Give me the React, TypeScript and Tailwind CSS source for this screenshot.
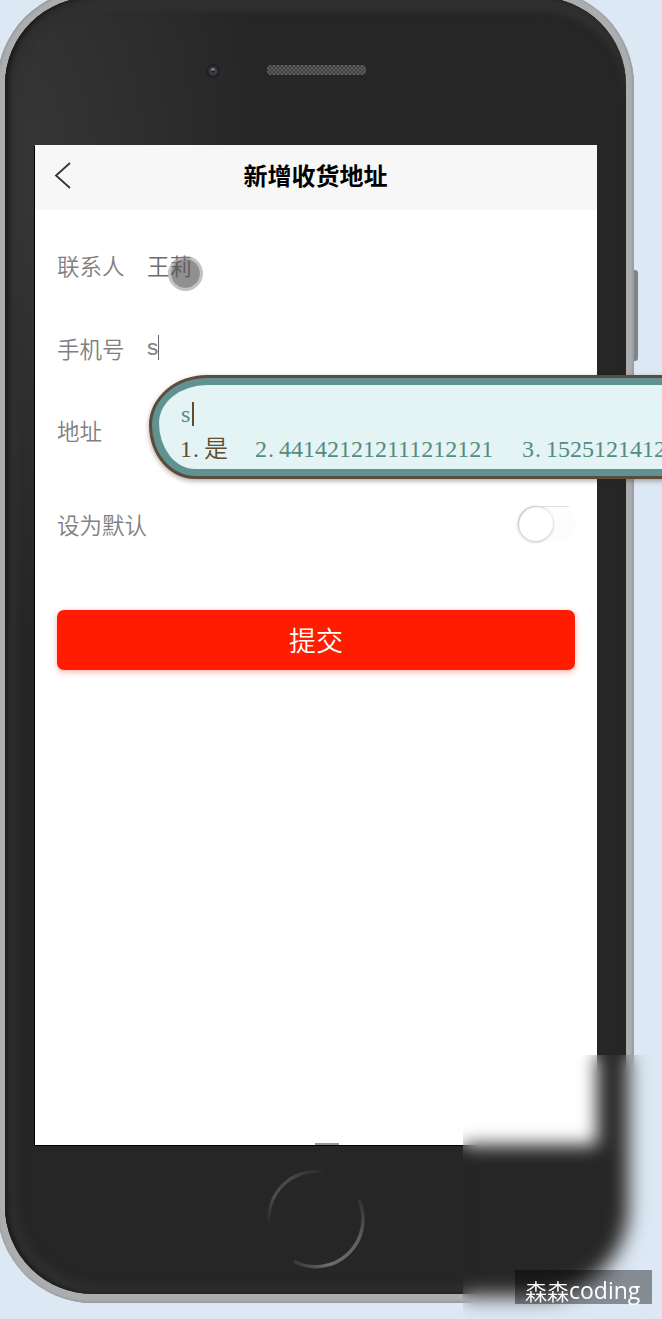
import React from "react";

function Header() {
  return (
    <header className="flex h-[65px] items-center bg-[#f7f7f7] pb-[5px] text-black">
      <svg className="ml-[17px] h-[28px] w-[20px]" viewBox="0 0 20 28" fill="none">
        <path d="M18 2 4 14.5l14 12.5" stroke="#333" strokeWidth="1.8" />
      </svg>
      <h1 className="flex-1 pr-[38px] text-center text-[24px] leading-[34px] font-bold">新增收货地址</h1>
    </header>
  );
}

function Row({ label, children }: { label: string; children?: React.ReactNode }) {
  return (
    <div className="flex h-[82.5px] items-center px-[22px] text-[22.5px] leading-[32px] font-[350] text-[#808080]">
      <span className="w-[90px] shrink-0 whitespace-nowrap">{label}</span>
      {children}
    </div>
  );
}

function PhoneScreen() {
  return (
    <main className="relative flex h-[1000px] w-[562px] flex-col bg-white shadow-[-1px_1px_0_#000]">
      <Header />
      <div className="pt-[14px]">
        <Row label="联系人">
          <span className="text-[#6c6c6c]">王莉</span>
        </Row>
        <Row label="手机号">
          <span className="font-['Liberation_Sans']">s</span>
          <span className="h-[25px] w-px bg-[#666]" />
        </Row>
        <Row label="地址" />
      </div>
      <div className="mt-[11px]">
        <Row label="设为默认">
          <div className="-mr-px ml-auto h-[36px] w-[58px] rounded-full bg-gradient-to-r from-white to-[#fcfcfc]">
            <div className="ml-[23px] h-px w-[28px] bg-[#dedede]" />
            <div className="-mt-px h-[35px] w-[35px] rounded-full bg-white shadow-[0_1px_3px_rgba(0,0,0,0.26),inset_1px_1px_1px_rgba(0,0,0,0.22)]" />
          </div>
        </Row>
      </div>
      <button className="mx-[22px] mt-[45px] h-[60px] rounded-[7px] bg-[#ff1c00] text-[27px] leading-[60px] font-[350] text-white shadow-[0_2px_6px_rgba(255,28,0,0.35)]">
        提交
      </button>
      <div className="mx-auto mt-auto h-[2px] w-[24px] translate-x-[11px] bg-[#999]" />
      <div className="absolute left-[133px] top-[111px] h-[35px] w-[35px] rounded-full border-[3px] border-[#888]/50 bg-[#555]/65 bg-clip-padding" />
    </main>
  );
}

function HomeButton() {
  return (
    <svg className="ml-[261px] mt-[24px] h-[100px] w-[100px]" viewBox="0 0 100 100" fill="none">
      <defs>
        <linearGradient id="arcTop" x1="2" y1="53" x2="55" y2="2" gradientUnits="userSpaceOnUse">
          <stop stopColor="#2a2a2a" />
          <stop offset=".3" stopColor="#4c4c4c" />
          <stop offset=".65" stopColor="#484848" />
          <stop offset="1" stopColor="#2a2a2a" />
        </linearGradient>
        <linearGradient id="arcBottom" x1="96" y1="30" x2="27" y2="93" gradientUnits="userSpaceOnUse">
          <stop stopColor="#303030" />
          <stop offset=".3" stopColor="#606060" />
          <stop offset=".75" stopColor="#6c6c6c" />
          <stop offset="1" stopColor="#383838" />
        </linearGradient>
      </defs>
      <path d="M3 55A47.5 47.5 0 0 1 56 2.8" stroke="url(#arcTop)" strokeWidth="3.2" />
      <path d="M93 31A47.5 47.5 0 0 1 28 92.5" stroke="url(#arcBottom)" strokeWidth="3.4" />
    </svg>
  );
}

function Phone() {
  return (
    <div className="relative -ml-[3px] -mt-[11px] h-[1314px] w-[637px] shrink-0 rounded-[96px] bg-[#acadaf] px-[8px] pt-[8px] pb-[9px] shadow-[inset_-2px_-2px_2px_#999da2,inset_1px_1px_2px_#999]">
      <div className="h-full w-full rounded-[88px] bg-[radial-gradient(ellipse_260px_460px_at_0px_170px,#373737,#262626)] pl-[30px] shadow-[inset_3px_0_5px_#181818,inset_10px_-8px_10px_#303030,inset_0_14px_6px_#303030]">
        <div className="flex h-[148px] items-start pt-[68px]">
          <svg className="ml-[171px] -mt-px h-[14px] w-[14px]" viewBox="0 0 14 14">
            <circle cx="7" cy="7" r="7" fill="#202124" />
            <circle cx="7" cy="7" r="4.5" fill="#3b3c3f" />
            <circle cx="7" cy="6" r="1.7" fill="#999" />
            <circle cx="7" cy="7.3" r="1.2" fill="#222" />
          </svg>
          <div className="ml-[47px] h-[10px] w-[99px] rounded-[4px] bg-[repeating-conic-gradient(#5c5c5c_0_25%,#404040_0_50%)] bg-[length:4px_4px]" />
        </div>
        <PhoneScreen />
        <div className="-ml-[30px]">
          <HomeButton />
        </div>
      </div>
      <div className="absolute left-full top-[281px] h-[91px] w-[4px] rounded-r-[3px] bg-[#7f8488]" />
    </div>
  );
}

function Candidate({ index, text, width }: { index: string; text: string; width: string }) {
  return (
    <span className={`${width} flex shrink-0`}>
      <span className="w-[12px]">{index}</span>
      <span className="w-[12px] pl-px">.</span>
      <span>{text}</span>
    </span>
  );
}

function InputMethodPanel() {
  return (
    <div className="absolute left-[149px] top-[375px] h-[104px] w-[600px] rounded-tl-[58px_50px] rounded-bl-[46px_54px] border-[3px] border-[#5d4b3b] bg-[#609292] p-[7px] shadow-[0_2px_5px_rgba(60,40,20,0.4)]">
      <div className="h-full w-full rounded-tl-[48px_38px] rounded-bl-[36px_46px] bg-[#e4f4f4] pl-[21px] pt-[15px] font-['Liberation_Serif','Noto_Sans_CJK_SC',serif] text-[24px] leading-[28px] text-[#548b83]">
        <div className="flex h-[28px] items-center">
          <span className="w-[12px] pl-px">s</span>
          <span className="h-[24px] w-[2px] bg-[#634b2d]" />
        </div>
        <div className="mt-[7px] flex h-[28px] items-center whitespace-nowrap">
          <span className="flex w-[24px] shrink-0 text-[#634b2d]">
            <span className="w-[12px]">1</span>
            <span className="pl-px">.</span>
          </span>
          <span className="w-[51px] shrink-0 -translate-y-[2px] font-['Noto_Sans_CJK_SC'] font-[350] text-[#634b2d]">是</span>
          <Candidate index="2" text="441421212111212121" width="w-[267px]" />
          <Candidate index="3" text="1525121412" width="w-[144px]" />
        </div>
      </div>
    </div>
  );
}

export default function App() {
  return (
    <div className="relative flex h-[1319px] w-[662px] items-start overflow-hidden bg-[#dde8f5] font-['Noto_Sans_CJK_SC',sans-serif]">
      <Phone />
      <InputMethodPanel />
      <div className="absolute left-[463px] top-[1055px] h-[264px] w-[189px] backdrop-blur-[9px]" />
      <div className="absolute left-[515px] top-[1270px] flex h-[34px] w-[137px] items-center bg-black/40 pl-[10px] text-[22px] leading-[34px] text-white">
        <span className="pt-[6px] font-[350]">森森</span>
        <span className="pt-[6px] font-['Open_Sans',sans-serif] text-[23px] font-normal">coding</span>
      </div>
    </div>
  );
}
